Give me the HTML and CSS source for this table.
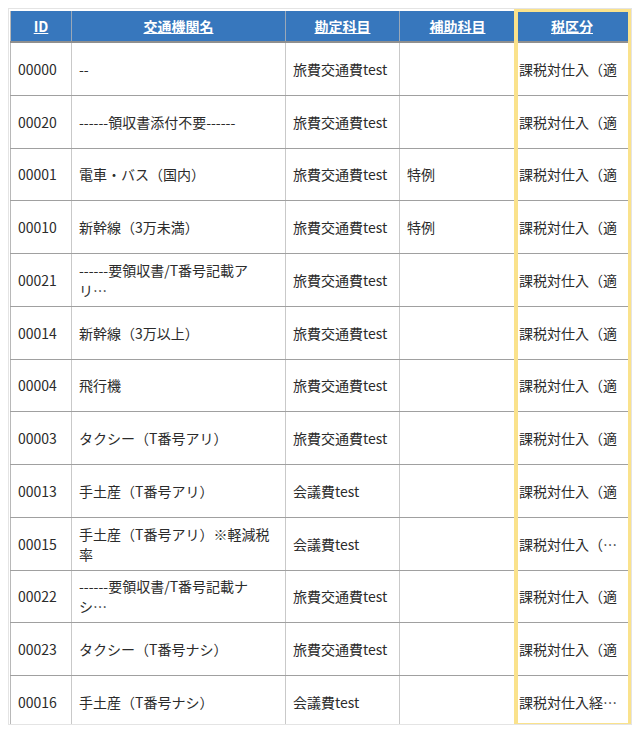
FILE: index.html
```html
<!DOCTYPE html>
<html lang="ja">
<head>
<meta charset="utf-8">
<title>交通機関</title>
<link rel="stylesheet" href="styles.css">
</head>
<body>
<div class="wrap">
  <table class="grid">
    <colgroup>
      <col class="c-id"><col class="c-name"><col class="c-acct"><col class="c-sub"><col class="c-tax">
    </colgroup>
    <thead>
      <tr>
        <th><a href="#">ID</a></th>
        <th><a href="#">交通機関名</a></th>
        <th><a href="#">勘定科目</a></th>
        <th><a href="#">補助科目</a></th>
        <th class="tax"><a href="#">税区分</a></th>
      </tr>
    </thead>
    <tbody>
      <tr><td>00000</td><td>--</td><td>旅費交通費test</td><td></td><td class="tax">課税対仕入（適</td></tr>
      <tr><td>00020</td><td>------領収書添付不要------</td><td>旅費交通費test</td><td></td><td class="tax">課税対仕入（適</td></tr>
      <tr><td>00001</td><td>電車・バス（国内）</td><td>旅費交通費test</td><td>特例</td><td class="tax">課税対仕入（適</td></tr>
      <tr><td>00010</td><td>新幹線（3万未満）</td><td>旅費交通費test</td><td>特例</td><td class="tax">課税対仕入（適</td></tr>
      <tr><td>00021</td><td class="two">------要領収書/T番号記載ア<br>リ…</td><td>旅費交通費test</td><td></td><td class="tax">課税対仕入（適</td></tr>
      <tr><td>00014</td><td>新幹線（3万以上）</td><td>旅費交通費test</td><td></td><td class="tax">課税対仕入（適</td></tr>
      <tr><td>00004</td><td>飛行機</td><td>旅費交通費test</td><td></td><td class="tax">課税対仕入（適</td></tr>
      <tr><td>00003</td><td>タクシー（T番号アリ）</td><td>旅費交通費test</td><td></td><td class="tax">課税対仕入（適</td></tr>
      <tr><td>00013</td><td>手土産（T番号アリ）</td><td>会議費test</td><td></td><td class="tax">課税対仕入（適</td></tr>
      <tr><td>00015</td><td class="two">手土産（T番号アリ）※軽減税<br>率</td><td>会議費test</td><td></td><td class="tax">課税対仕入（…</td></tr>
      <tr><td>00022</td><td class="two">------要領収書/T番号記載ナ<br>シ…</td><td>旅費交通費test</td><td></td><td class="tax">課税対仕入（適</td></tr>
      <tr><td>00023</td><td>タクシー（T番号ナシ）</td><td>旅費交通費test</td><td></td><td class="tax">課税対仕入（適</td></tr>
      <tr><td>00016</td><td>手土産（T番号ナシ）</td><td>会議費test</td><td></td><td class="tax">課税対仕入経…</td></tr>
    </tbody>
  </table>
  <div class="highlight"></div>
</div>
</body>
</html>
```
FILE: styles.css
```css
html, body {
  margin: 0;
  padding: 0;
  background: #ffffff;
}
body {
  padding: 8px;
  font-family: "Noto Sans CJK JP", "Noto Sans", sans-serif;
  font-size: 14px;
  color: #2b2b2b;
}
.wrap {
  position: relative;
  box-sizing: border-box;
  width: 624px;
  height: 717px;
  border: 1px solid #e4e4e4;
  padding: 2px 1px 1px 1px;
  overflow: hidden;
}
.grid {
  border-collapse: collapse;
  table-layout: fixed;
  width: 618px;
  border-left: 1px solid #b8b8b8;
}
.c-id { width: 61px; }
.c-name { width: 214px; }
.c-acct { width: 114px; }
.c-sub { width: 116px; }
.c-tax { width: 113px; }
.grid th {
  background: #3777bd;
  height: 30px;
  padding: 0 4px;
  border-right: 1px solid #9aa8b8;
  border-bottom: 2px solid #8f8f8f;
  font-weight: bold;
  font-size: 14px;
  text-align: center;
}
.grid th a {
  color: #ffffff;
  text-decoration: underline;
}
.grid td {
  height: 51.75px;
  padding: 0 4px 0 7px;
  border-right: 1px solid #c9c9c9;
  border-bottom: 1px solid #a0a0a0;
  vertical-align: middle;
  white-space: nowrap;
  overflow: hidden;
  line-height: 20px;
}
.grid td.two {
  white-space: normal;
}
.grid td.tax {
  padding-left: 3px;
  padding-right: 0;
  text-overflow: clip;
}
.highlight {
  position: absolute;
  left: 505px;
  top: -1px;
  width: 118px;
  height: 719px;
  box-sizing: border-box;
  border: 4px solid #fae28c;
  border-radius: 2px;
  pointer-events: none;
}
```
